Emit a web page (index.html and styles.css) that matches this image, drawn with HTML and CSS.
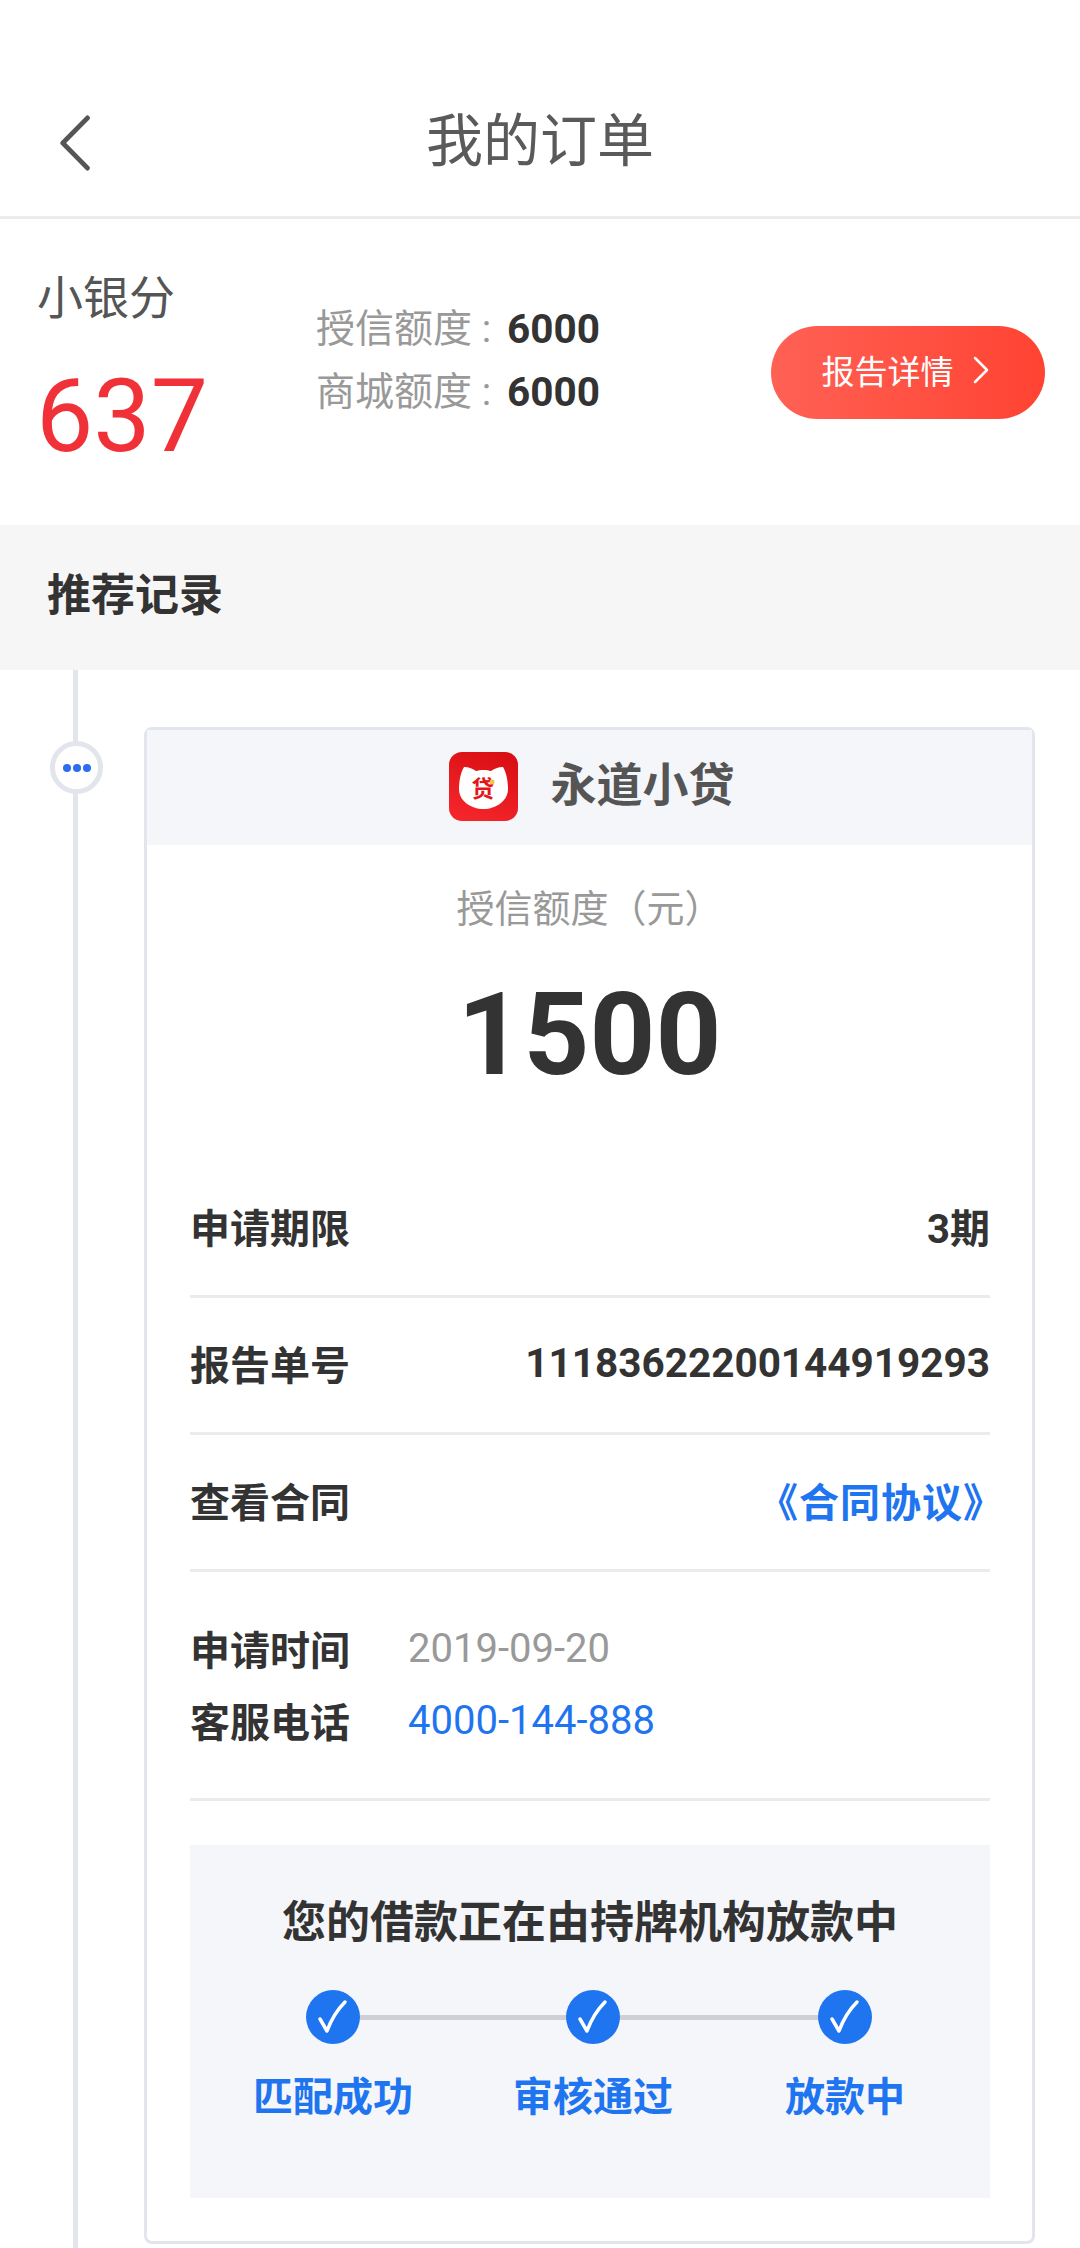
FILE: index.html
```html
<!DOCTYPE html>
<html lang="zh-CN">
<head>
    <meta charset="UTF-8">
    <meta name="viewport" content="width=device-width, initial-scale=1.0">
    <title>我的订单</title>
    <link rel="stylesheet" href="styles.css">
</head>
<body>
    <div class="page">
        <header class="top-bar">
            <svg class="back" width="36" height="56" viewBox="0 0 36 56"><path d="M31 3 L5 28 L31 53" transform="matrix(0.95 0 0 1 0 0)"/></svg>
            <h1>我的订单</h1>
        </header>

        <section class="summary">
            <div class="score">
                <p class="score-label">小银分</p>
                <p class="score-num">637</p>
            </div>
            <div class="limits">
                <p><span>授信额度 :</span><b>6000</b></p>
                <p><span>商城额度 :</span><b>6000</b></p>
            </div>
            <button class="report-btn"><span>报告详情</span>
                <svg width="18" height="28" viewBox="0 0 18 28"><path d="M3 2 L15 14 L3 26"/></svg>
            </button>
        </section>

        <h2 class="band">推荐记录</h2>

        <main class="timeline">
            <div class="node"><i></i><i></i><i></i></div>
            <div class="card">
                <div class="card-head">
                    <svg class="logo" width="69" height="69" viewBox="0 0 69 69">
                        <defs>
                            <linearGradient id="logoBg" x1="0.7" y1="0" x2="0.3" y2="1">
                                <stop offset="0" stop-color="#d80f14"/>
                                <stop offset="1" stop-color="#f5262b"/>
                            </linearGradient>
                        </defs>
                        <rect width="69" height="69" rx="13" fill="url(#logoBg)"/>
                        <path d="M10 37 C10 28 12 20 15 15 C20 15 24 17 27 19 C31 17.500 38 17.500 42 19 C45 17 49 15 54 15 C57 20 59 28 59 37 C59 49 47 57 34.500 57 C22 57 10 49 10 37 Z" fill="#fff"/>
                        <text x="34" y="45" class="logo-char">贷</text>
                        <circle cx="43" cy="30" r="2.500" fill="#f3c34a"/>
                    </svg>
                    <span>永道小贷</span>
                </div>

                <p class="amount-label">授信额度（元）</p>
                <p class="amount">1500</p>

                <div class="rows">
                    <div class="row"><b>申请期限</b><b>3期</b></div>
                    <div class="row"><b>报告单号</b><b class="order-no">11183622200144919293</b></div>
                    <div class="row"><b>查看合同</b><b class="link">《合同协议》</b></div>
                    <div class="info">
                        <p><b>申请时间</b><span class="date">2019-09-20</span></p>
                        <p><b>客服电话</b><span class="phone">4000-144-888</span></p>
                    </div>
                </div>

                <div class="status">
                    <h3>您的借款正在由持牌机构放款中</h3>
                    <div class="steps">
                        <div class="step">
                            <svg width="54" height="54" viewBox="0 0 54 54"><circle cx="27" cy="27" r="27"/><path d="M14 29 L21 41 C25 30 31 20 39 12"/></svg>
                            <span>匹配成功</span>
                        </div>
                        <div class="step">
                            <svg width="54" height="54" viewBox="0 0 54 54"><circle cx="27" cy="27" r="27"/><path d="M14 29 L21 41 C25 30 31 20 39 12"/></svg>
                            <span>审核通过</span>
                        </div>
                        <div class="step step-last">
                            <svg width="54" height="54" viewBox="0 0 54 54"><circle cx="27" cy="27" r="27"/><path d="M14 29 L21 41 C25 30 31 20 39 12"/></svg>
                            <span>放款中</span>
                        </div>
                    </div>
                </div>
            </div>
        </main>
    </div>
</body>
</html>
```

FILE: styles.css
```css
*{
    margin: 0;
    padding: 0;
    box-sizing: border-box;
}

body{
    background-color: #fff;
    font-family: Roboto, "Noto Sans CJK SC", sans-serif;
    color: #333;
}

.page{
    width: 1080px;
    height: 2248px;
    overflow: hidden;
}

.top-bar{
    position: relative;
    height: 219px;
    padding-top: 103px;
    border-bottom: 3px solid #ebebeb;
    text-align: center;
}

.top-bar h1{
    font-size: 57px;
    line-height: 78px;
    font-weight: 400;
    color: #5a5a5a;
}

.back{
    position: absolute;
    left: 58px;
    top: 115px;
}

.back path{
    fill: none;
    stroke: #555;
    stroke-width: 5;
    stroke-linecap: round;
    stroke-linejoin: round;
}

.summary{
    height: 306px;
    display: flex;
    align-items: flex-start;
}

.score{
    width: 316px;
    padding-left: 37px;
}

.score-label{
    margin-top: 47px;
    font-size: 46px;
    line-height: 64px;
    color: #555;
}

.score-num{
    margin-top: 28px;
    margin-left: -1px;
    font-size: 102px;
    line-height: 116px;
    color: #f03238;
}

.limits{
    width: 455px;
    padding-top: 79px;
    font-size: 39px;
    line-height: 63px;
}

.limits p{
    display: flex;
    align-items: center;
}

.limits span{
    width: 191px;
    white-space: nowrap;
    color: #999;
}

.limits b{
    font-size: 40.500px;
    color: #333;
}

.report-btn{
    margin-top: 107px;
    width: 274px;
    height: 93px;
    padding: 0 5px 6px 0;
    border: none;
    border-radius: 47px;
    background: linear-gradient(to right, #ff6155, #ff4332);
    color: #fff;
    font-family: inherit;
    font-size: 33px;
    display: flex;
    justify-content: center;
    align-items: center;
    gap: 18px;
}

.report-btn path{
    fill: none;
    stroke: #fff;
    stroke-width: 2.5;
    stroke-linecap: round;
    stroke-linejoin: round;
}

.band{
    height: 145px;
    padding-left: 47px;
    background-color: #f6f6f7;
    font-size: 44px;
    line-height: 143px;
    font-weight: 700;
    color: #333;
}

.timeline{
    position: relative;
    padding: 57px 45px 0 144px;
}

.timeline::before{
    content: "";
    position: absolute;
    left: 73px;
    top: 0;
    bottom: -10px;
    width: 5px;
    background-color: #e3e5ec;
}

.node{
    position: absolute;
    left: 50px;
    top: 71px;
    width: 53px;
    height: 53px;
    border: 5px solid #e3e5ec;
    border-radius: 50%;
    background-color: #fff;
    display: flex;
    justify-content: center;
    align-items: center;
    gap: 2px;
}

.node i{
    width: 8px;
    height: 8px;
    border-radius: 50%;
    background-color: #2b6ff0;
}

.card{
    height: 1517px;
    border: 3px solid #e3e5ec;
    border-radius: 8px;
    background-color: #fff;
}

.card-head{
    height: 115px;
    padding-top: 22px;
    padding-left: 4px;
    background-color: #f4f6fa;
    display: flex;
    justify-content: center;
    align-items: flex-start;
    gap: 33px;
    font-size: 46px;
    line-height: 66px;
    font-weight: 700;
    color: #555;
}

.logo-char{
    font-size: 23px;
    font-weight: 700;
    fill: #e3161c;
    text-anchor: middle;
}

.amount-label{
    margin-top: 37px;
    text-align: center;
    font-size: 38px;
    line-height: 54px;
    color: #999;
}

.amount{
    margin-top: 31px;
    text-align: center;
    font-size: 115px;
    line-height: 136px;
    font-weight: 700;
    color: #333;
}

.rows{
    margin: 58px 42px 0 43px;
    font-size: 40px;
}

.row{
    height: 137px;
    padding-bottom: 5px;
    border-bottom: 3px solid #ebebeb;
    display: flex;
    justify-content: space-between;
    align-items: center;
}

.row .order-no{
    font-size: 40.500px;
}

.row .link{
    margin-right: -14px;
    letter-spacing: 1px;
    color: #1f74f0;
}

.info{
    height: 229px;
    padding-top: 40px;
    border-bottom: 3px solid #ebebeb;
}

.info p{
    height: 72px;
    display: flex;
    align-items: center;
}

.info b{
    width: 218px;
}

.date{
    color: #999;
}

.phone{
    color: #1f74f0;
}

.status{
    margin: 44px 42px 0 43px;
    height: 353px;
    padding-top: 45px;
    background-color: #f4f6fa;
}

.status h3{
    text-align: center;
    font-size: 44px;
    line-height: 66px;
    font-weight: 700;
    color: #333;
}

.steps{
    position: relative;
    margin-top: 34px;
    padding-left: 63px;
    display: flex;
    gap: 100px;
}

.steps::before{
    content: "";
    position: absolute;
    left: 150px;
    width: 500px;
    top: 25px;
    height: 5px;
    background-color: #cfd0d6;
}

.step{
    position: relative;
    display: flex;
    flex-direction: column;
    align-items: center;
    gap: 27px;
    font-size: 40px;
    line-height: 54px;
    font-weight: 700;
    color: #1f74f0;
}

.step-last{
    margin-left: 12px;
}

.step circle{
    fill: #1f74f0;
}

.step path{
    fill: none;
    stroke: #fff;
    stroke-width: 3.500;
    stroke-linecap: round;
    stroke-linejoin: round;
}
```
